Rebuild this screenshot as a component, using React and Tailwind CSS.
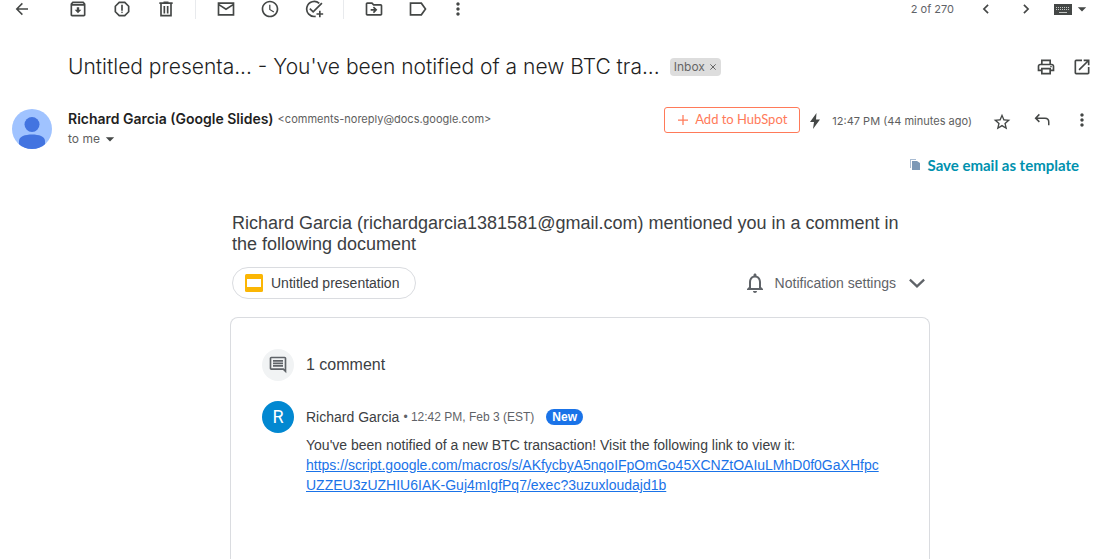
import React from "react";
import {
  MdArrowDropDown,
  MdOutlineArchive,
  MdOutlineDriveFileMove,
  MdOutlineReport,
  MdAccessTime,
  MdMoreVert,
  MdOutlinePrint,
  MdOpenInNew,
  MdStarBorder,
  MdNotificationsNone,
  MdOutlineComment,
} from "react-icons/md";

function Stroke({ d, size = 20, width = 2, className = "" }) {
  return (
    <svg
      width={size}
      height={size}
      viewBox="0 0 24 24"
      fill="none"
      stroke="currentColor"
      strokeWidth={width}
      className={"shrink-0 " + className}
      aria-hidden="true"
    >
      <path d={d} />
    </svg>
  );
}

function IconButton({ label, className = "w-11", children }) {
  return (
    <button
      type="button"
      aria-label={label}
      className={"flex h-5 shrink-0 items-center justify-center text-[#444746] " + className}
    >
      {children}
    </button>
  );
}

function Divider() {
  return (
    <span className="flex w-4 shrink-0 pl-[7px]">
      <span className="h-5 w-px bg-[#e8eaed]" />
    </span>
  );
}

function Toolbar() {
  return (
    <nav aria-label="Message actions" className="flex h-[18px] items-center justify-between pr-[9px]">
      <div className="flex items-center">
        <IconButton label="Back">
          <Stroke size={18} d="M20 12H5M12.5 4.5 5 12l7.5 7.5" />
        </IconButton>
        <div className="flex items-center pl-3">
          <IconButton label="Archive">
            <MdOutlineArchive size={20} />
          </IconButton>
          <IconButton label="Report spam">
            <MdOutlineReport size={20} />
          </IconButton>
          <IconButton label="Delete">
            <Stroke d="M4 5h16M9 4h6M6 6v14h12V6M10 8.500v9M14 8.500v9" />
          </IconButton>
          <Divider />
          <IconButton label="Mark as unread">
            <Stroke d="M3 5h18v14H3zM3 6.500l9 5.800 9-5.800" />
          </IconButton>
          <IconButton label="Snooze">
            <MdAccessTime size={20} />
          </IconButton>
          <IconButton label="Add to tasks">
            <Stroke d="M18.300 5.300A9 9 0 1 0 14 20.800M7 11.500l4 4L21.500 5M19 14v8M15 18h8" />
          </IconButton>
          <Divider />
          <IconButton label="Move to">
            <MdOutlineDriveFileMove size={20} />
          </IconButton>
          <IconButton label="Labels">
            <Stroke d="M3 5h13l5 7-5 7H3z" />
          </IconButton>
          <IconButton label="More" className="w-9">
            <MdMoreVert size={20} />
          </IconButton>
        </div>
      </div>
      <div className="flex items-center">
        <span className="font-[Inter,sans-serif] text-[11px] text-[#5f6368]">2 of 270</span>
        <IconButton label="Newer" className="ml-3 w-10">
          <Stroke d="M14.500 7 9.500 12l5 5" />
        </IconButton>
        <IconButton label="Older" className="w-10">
          <Stroke d="m9.500 7 5 5-5 5" />
        </IconButton>
        <button
          type="button"
          aria-label="Select input tool"
          className="ml-2 flex h-5 items-center text-[#444746]"
        >
          <svg width="18" height="12" viewBox="0 0 18 12" aria-hidden="true">
            <path fill="currentColor" d="M0 1h18v11H0z" />
            <path
              stroke="#c4c7c5"
              strokeWidth="1"
              strokeDasharray="1 1"
              fill="none"
              d="M2 4.500h14M2 6.500h14"
            />
            <path stroke="#c4c7c5" d="M5 9.500h8" />
          </svg>
          <MdArrowDropDown size={20} />
        </button>
      </div>
    </nav>
  );
}

function Subject() {
  return (
    <div className="mt-[33px] flex h-8 items-center justify-between pr-px pl-[68px]">
      <div className="flex min-w-0 items-center gap-2.5">
        <h1 className="truncate font-[Inter,sans-serif] text-[21px] font-light leading-7 text-[#1f1f1f]">
          Untitled presenta... - You've been notified of a new BTC tra...
        </h1>
        <span className="flex h-[18px] shrink-0 items-center gap-1 rounded bg-[#ddd] px-1 font-[Inter,sans-serif] text-xs text-[#666]">
          Inbox
          <button type="button" aria-label="Remove label Inbox" className="flex">
            <Stroke size={8} width={3} d="m4 4 16 16M20 4 4 20" />
          </button>
        </span>
      </div>
      <div className="flex items-center">
        <IconButton label="Print all" className="w-9">
          <MdOutlinePrint size={20} />
        </IconButton>
        <IconButton label="Open in new window" className="w-9">
          <MdOpenInNew size={20} />
        </IconButton>
      </div>
    </div>
  );
}

function Sender() {
  return (
    <div className="mt-6 flex items-start justify-between pl-3">
      <div className="flex gap-4">
        <svg width="40" height="40" viewBox="0 0 40 40" className="mt-0.5 shrink-0" aria-hidden="true">
          <defs>
            <clipPath id="avatar-clip">
              <circle cx="20" cy="20" r="20" />
            </clipPath>
          </defs>
          <g clipPath="url(#avatar-clip)">
            <path fill="#a0c3ff" d="M0 0h40v40H0z" />
            <circle cx="20" cy="15.500" r="7.500" fill="#4374e0" />
            <path fill="#4374e0" d="M7 40v-8c0-4.500 6-6.500 13-6.500s13 2 13 6.500v8z" />
          </g>
        </svg>
        <div className="mt-0.5 font-[Inter,sans-serif] leading-5">
          <div className="flex items-center gap-1">
            <h2 className="text-sm font-semibold leading-5 text-[#1f1f1f]">Richard Garcia (Google Slides)</h2>
            <span className="text-[11px] text-[#5e5e5e]">&lt;comments-noreply@docs.google.com&gt;</span>
          </div>
          <button type="button" aria-label="Show details" className="flex h-5 items-center text-xs text-[#5e5e5e]">
            to me
            <MdArrowDropDown size={20} className="text-[#444746]" />
          </button>
        </div>
      </div>
      <div className="flex items-center">
        <button
          type="button"
          className="flex h-[26px] items-center gap-1.5 rounded-[3px] border border-[#ff7a59] px-3 font-[Lato,sans-serif] text-[13px] text-[#ff7a59]"
        >
          <Stroke size={12} width={2.5} d="M12 2v20M2 12h20" />
          Add to HubSpot
        </button>
        <svg width="10" height="16" viewBox="0 0 10 16" className="mt-0.5 ml-2.5 shrink-0 text-[#444746]" aria-hidden="true">
          <path fill="currentColor" d="M6.500 0 0 9h4l-1 7 7-9.500H6z" />
        </svg>
        <time className="ml-3 mt-0.5 font-[Inter,sans-serif] text-[11px] text-[#5e5e5e]">12:47 PM (44 minutes ago)</time>
        <IconButton label="Star" className="ml-2.5 mt-1 w-10">
          <MdStarBorder size={20} />
        </IconButton>
        <IconButton label="Reply" className="w-10">
          <Stroke size={18} d="M8.500 4.500 3.500 9.500l5 5M3.500 9.500H16q5 0 5 5V19" />
        </IconButton>
        <IconButton label="More options" className="w-[39px]">
          <MdMoreVert size={20} />
        </IconButton>
      </div>
    </div>
  );
}

function Comment() {
  return (
    <div className="mt-5 flex gap-3">
      <div className="flex size-8 shrink-0 items-center justify-center rounded-full bg-[#0288d1] font-[Roboto,sans-serif] text-lg text-white">
        R
      </div>
      <div className="min-w-0 max-w-[580px] pt-1.5">
        <div className="flex h-5 items-center text-sm text-[#3c4043]">
          Richard Garcia
          <span className="ml-1 text-xs text-[#5f6368]">• 12:42 PM, Feb 3 (EST)</span>
          <span className="ml-3 flex h-4 items-center rounded-full bg-[#1a73e8] px-1.5 text-xs font-bold text-white">
            New
          </span>
        </div>
        <p className="mt-2 text-sm leading-5 text-[#3c4043]">
          You've been notified of a new BTC transaction! Visit the following link to view it:
        </p>
        <p className="text-sm leading-5">
          <a href="#link" className="break-all text-[#1a73e8] underline">
            https://script.google.com/macros/s/AKfycbyA5nqoIFpOmGo45XCNZtOAIuLMhD0f0GaXHfpcUZZEU3zUZHIU6IAK-Guj4mIgfPq7/exec?3uzuxloudajd1b
          </a>
        </p>
      </div>
    </div>
  );
}

export default function App() {
  return (
    <div className="h-screen overflow-hidden bg-white">
      <Toolbar />
      <main className="flex h-[calc(100vh-18px)] flex-col">
        <Subject />
        <Sender />
        <div className="mt-1.5 flex shrink-0 justify-end pr-[22px]">
          <button
            type="button"
            className="flex h-5 items-center gap-2 font-[Lato,sans-serif] text-[15px] font-bold text-[#0091ae]"
          >
            <svg width="11" height="12" viewBox="0 0 11 12" aria-hidden="true">
              <path fill="#a9bcd3" d="M1 0h6v1H2v8H1z" />
              <path fill="#7c98b6" d="M3 2h5l3 2v7H3z" />
            </svg>
            Save email as template
          </button>
        </div>
        <div className="mt-[38px] flex min-h-0 flex-1 justify-center pr-[9px] pl-[68px] font-['Liberation_Sans',Arial,sans-serif]">
          <article className="flex w-full max-w-[700px] flex-col">
            <p className="px-0.5 text-lg leading-[21px] text-[#3c4043]">
              Richard Garcia (richardgarcia1381581@gmail.com) mentioned you in a comment in the following document
            </p>
            <div className="mt-3 flex items-center justify-between pr-1 pl-0.5">
              <a
                href="#document"
                className="flex h-8 items-center gap-2 rounded-full border border-[#dadce0] pr-4 pl-3 text-sm text-[#3c4043]"
              >
                <svg width="18" height="18" viewBox="0 0 18 18" aria-hidden="true">
                  <rect width="18" height="18" rx="1.500" fill="#fbb604" />
                  <path fill="#fff" d="M2 5h14v8H2z" />
                </svg>
                Untitled presentation
              </a>
              <button type="button" className="flex h-8 items-center text-sm text-[#5f6368]">
                <MdNotificationsNone size={24} className="mr-2" />
                Notification settings
                <Stroke size={18} width={3} className="ml-3" d="m2.500 7.500 9.500 9 9.500-9" />
              </button>
            </div>
            <section className="mt-[18px] flex-1 rounded-t-lg border border-b-0 border-[#dadce0] px-[31px] pt-[31px]">
              <div className="flex items-center gap-3">
                <span className="flex size-8 items-center justify-center rounded-full bg-[#f1f3f4] text-[#5f6368]">
                  <MdOutlineComment size={20} />
                </span>
                <h3 className="text-base text-[#3c4043]">1 comment</h3>
              </div>
              <Comment />
            </section>
          </article>
        </div>
      </main>
    </div>
  );
}
